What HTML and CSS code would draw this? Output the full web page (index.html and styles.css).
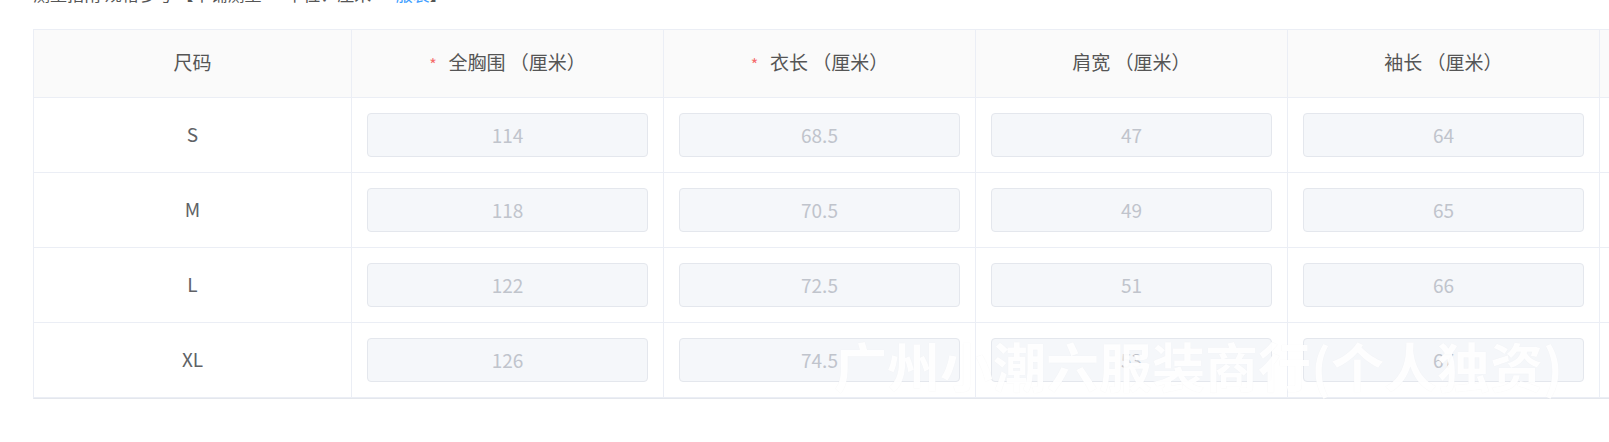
FILE: index.html
```html
<!DOCTYPE html>
<html lang="zh-CN">
<head>
<meta charset="utf-8">
<title>尺码表</title>
<link rel="stylesheet" href="styles.css">
</head>
<body>
<div class="page">
  <div class="caption">测量指南 规格参考 【平铺测量 · 单位：厘米 · <span class="link">服装</span>】</div>
  <div class="table-wrap">
    <table class="size-table">
      <colgroup>
        <col class="c-first"><col class="c"><col class="c"><col class="c"><col class="c"><col class="c">
      </colgroup>
      <thead>
        <tr>
          <th>尺码</th>
          <th><span class="req">*</span>全胸围 （厘米）</th>
          <th><span class="req">*</span>衣长 （厘米）</th>
          <th>肩宽 （厘米）</th>
          <th>袖长 （厘米）</th>
          <th>下摆 （厘米）</th>
        </tr>
      </thead>
      <tbody>
        <tr>
          <td class="size">S</td>
          <td><input class="field" value="114" disabled></td>
          <td><input class="field" value="68.5" disabled></td>
          <td><input class="field" value="47" disabled></td>
          <td><input class="field" value="64" disabled></td>
          <td><input class="field" value="" disabled></td>
        </tr>
        <tr>
          <td class="size">M</td>
          <td><input class="field" value="118" disabled></td>
          <td><input class="field" value="70.5" disabled></td>
          <td><input class="field" value="49" disabled></td>
          <td><input class="field" value="65" disabled></td>
          <td><input class="field" value="" disabled></td>
        </tr>
        <tr>
          <td class="size">L</td>
          <td><input class="field" value="122" disabled></td>
          <td><input class="field" value="72.5" disabled></td>
          <td><input class="field" value="51" disabled></td>
          <td><input class="field" value="66" disabled></td>
          <td><input class="field" value="" disabled></td>
        </tr>
        <tr class="last">
          <td class="size">XL</td>
          <td><input class="field" value="126" disabled></td>
          <td><input class="field" value="74.5" disabled></td>
          <td><input class="field" value="53" disabled></td>
          <td><input class="field" value="67" disabled></td>
          <td><input class="field" value="" disabled></td>
        </tr>
      </tbody>
    </table>
  </div>
  <div class="watermark">广州小潮六服装商行(个人独资)</div>
</div>
</body>
</html>
```
FILE: styles.css
```css
html, body {
  margin: 0;
  padding: 0;
  background: #ffffff;
  overflow: hidden;
}

.page {
  position: relative;
  width: 1609px;
  height: 442px;
  overflow: hidden;
  font-family: "Noto Sans CJK SC", "Microsoft YaHei", sans-serif;
  color: #606266;
}

.caption {
  margin: -16px 0 0 33px;
  height: 20px;
  line-height: 20px;
  font-size: 17px;
  color: #555555;
  white-space: nowrap;
}

.caption .link {
  color: #409eff;
}

.table-wrap {
  margin: 25px 0 0 33px;
  overflow: hidden;
}

.size-table {
  border-collapse: separate;
  border-spacing: 0;
  table-layout: fixed;
  width: 1879px;
  border-top: 1px solid #ebeef5;
  border-left: 1px solid #ebeef5;
  border-bottom: 1px solid #e4e7ed;
}

.size-table col.c-first { width: 318px; }
.size-table col.c { width: 312px; }

.size-table th,
.size-table td {
  border-right: 1px solid #ebeef5;
  border-bottom: 1px solid #ebeef5;
  text-align: center;
  vertical-align: middle;
  padding: 0 15px;
  box-sizing: border-box;
}

.size-table th {
  height: 68px;
  padding-bottom: 4px;
  background: #fafafa;
  font-weight: normal;
  font-size: 19px;
  color: #555555;
  white-space: nowrap;
}

.size-table td {
  height: 75px;
  font-size: 19px;
  color: #606266;
}

.size-table td.size {
  padding-bottom: 4px;
}

.req {
  color: #f56c6c;
  font-size: 16px;
  margin-right: 12px;
  position: relative;
  top: 1px;
}

.field {
  display: block;
  width: 100%;
  height: 44px;
  box-sizing: border-box;
  margin: 0;
  padding: 0 10px 2px;
  background: #f5f7fa;
  border: 1px solid #e4e7ed;
  border-radius: 4px;
  text-align: center;
  font-family: "Noto Sans CJK SC", "Microsoft YaHei", sans-serif;
  font-size: 19px;
  color: #c0c4cc;
  -webkit-text-fill-color: #c0c4cc;
  opacity: 1;
  outline: none;
}

.watermark {
  position: absolute;
  left: 834px;
  top: 335px;
  font-size: 53px;
  line-height: 60px;
  font-weight: bold;
  color: rgba(255, 255, 255, 0.95);
  text-shadow: 0 0 1px rgba(0, 0, 0, 0.05);
  white-space: nowrap;
  pointer-events: none;
}
```
